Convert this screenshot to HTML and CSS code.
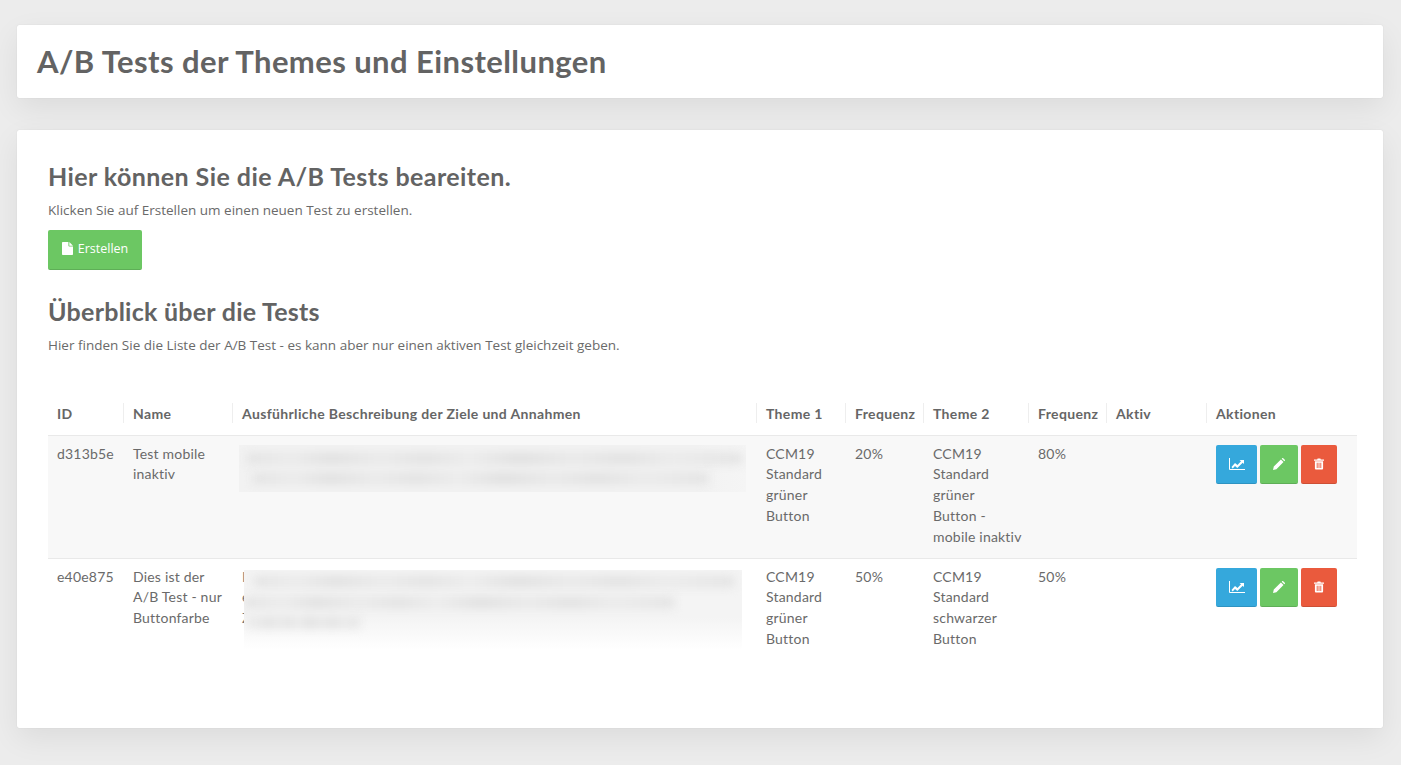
FILE: index.html
```html
<!DOCTYPE html>
<html lang="de">
<head>
<meta charset="utf-8">
<title>A/B Tests</title>
<link rel="stylesheet" href="styles.css">
</head>
<body>
<header class="card page-head"><h1>A/B Tests der Themes und Einstellungen</h1></header>
<main class="card content">
  <h2>Hier können Sie die A/B Tests beareiten.</h2>
  <p>Klicken Sie auf Erstellen um einen neuen Test zu erstellen.</p>
  <a class="btn btn-create" href="#">
    <svg class="file-icon" viewBox="0 0 12 14"><path fill="#fff" d="M0 .8C0 .4.4 0 .8 0H7v4c0 .5.4.9.9.9H12v8.3c0 .4-.4.8-.8.8H.8c-.4 0-.8-.4-.8-.8zM8 0l4 3.900H8z"/></svg>
    Erstellen
  </a>
  <h3>Überblick über die Tests</h3>
  <p>Hier finden Sie die Liste der A/B Test - es kann aber nur einen aktiven Test gleichzeit geben.</p>
  <table>
    <colgroup>
      <col class="c-id"><col class="c-name"><col class="c-desc"><col class="c-theme1"><col class="c-freq1"><col class="c-theme2"><col class="c-freq2"><col class="c-active"><col class="c-actions">
    </colgroup>
    <thead>
      <tr><th>ID</th><th>Name</th><th>Ausführliche Beschreibung der Ziele und Annahmen</th><th>Theme 1</th><th>Frequenz</th><th>Theme 2</th><th>Frequenz</th><th>Aktiv</th><th>Aktionen</th></tr>
    </thead>
    <tbody>
      <tr class="row-a">
        <td>d313b5e</td><td>Test mobile inaktiv</td>
        <td class="desc">
          <div class="redact redact-a"><span class="smear s1"></span><span class="smear s2"></span></div>
        </td>
        <td>CCM19 Standard grüner Button</td><td>20%</td><td>CCM19 Standard grüner Button - mobile&nbsp;inaktiv</td><td>80%</td><td></td>
        <td class="actions">
          <div class="btn-row">
            <a class="btn btn-chart" href="#"><svg viewBox="0 0 16 12"><path fill="none" stroke="#fff" stroke-width="1" d="M.5 0v11.500H16"/><path fill="#fff" d="M2.500 9 6 5l2.500 2L12 3.200 10.500 2H15v4l-1.300-1.300L8.300 10 6 8l-2.300 2.500z"/></svg></a>
            <a class="btn btn-edit" href="#"><svg viewBox="0 0 12 12"><path fill="#fff" d="M0 12l.8-3.400L7.900 1.500l2.600 2.600L3.400 11.200zM8.700.7 9.200.2c.3-.3.700-.3 1 0l1.600 1.600c.3.300.3.700 0 1l-.5.5z"/></svg></a>
            <a class="btn btn-del" href="#"><svg viewBox="0 0 11 12"><path fill="#fff" fill-rule="evenodd" d="M3.500 1 4 0h3l.5 1H11v1.300H0V1zM1 3h9v8c0 .6-.4 1-1 1H2c-.6 0-1-.4-1-1zm2 1.500V10.500h1V4.500zm2 0V10.500h1V4.500zm2 0V10.500h1V4.500z"/></svg></a>
          </div>
        </td>
      </tr>
      <tr>
        <td>e40e875</td><td>Dies ist der A/B Test - nur Buttonfarbe</td>
        <td class="desc">
          <span class="peek">I<br>e<br>Z</span>
          <div class="redact redact-b"><span class="smear s3"></span><span class="smear s4"></span><span class="smear s5"></span></div>
        </td>
        <td>CCM19 Standard grüner Button</td><td>50%</td><td>CCM19 Standard schwarzer Button</td><td>50%</td><td></td>
        <td class="actions">
          <div class="btn-row">
            <a class="btn btn-chart" href="#"><svg viewBox="0 0 16 12"><path fill="none" stroke="#fff" stroke-width="1" d="M.5 0v11.500H16"/><path fill="#fff" d="M2.500 9 6 5l2.500 2L12 3.200 10.500 2H15v4l-1.300-1.300L8.300 10 6 8l-2.300 2.500z"/></svg></a>
            <a class="btn btn-edit" href="#"><svg viewBox="0 0 12 12"><path fill="#fff" d="M0 12l.8-3.400L7.900 1.500l2.600 2.600L3.400 11.200zM8.700.7 9.200.2c.3-.3.700-.3 1 0l1.600 1.600c.3.300.3.700 0 1l-.5.5z"/></svg></a>
            <a class="btn btn-del" href="#"><svg viewBox="0 0 11 12"><path fill="#fff" fill-rule="evenodd" d="M3.500 1 4 0h3l.5 1H11v1.300H0V1zM1 3h9v8c0 .6-.4 1-1 1H2c-.6 0-1-.4-1-1zm2 1.500V10.500h1V4.500zm2 0V10.500h1V4.500zm2 0V10.500h1V4.500z"/></svg></a>
          </div>
        </td>
      </tr>
    </tbody>
  </table>
</main>
</body>
</html>
```

FILE: styles.css
```css
* { box-sizing: border-box; }
html, body { height: 100%; }
body {
  margin: 0;
  padding: 25px 18px 0 17px;
  background: #ececec;
  color: #666;
  font-family: "Lato", "Open Sans", sans-serif;
  font-size: 13px;
  overflow: hidden;
}
.card {
  background: #fff;
  border-radius: 2px;
  box-shadow: 0 0 1px rgba(0,0,0,.18), 0 10px 30px rgba(0,0,0,.07);
}
.page-head {
  height: 73px;
  padding: 0 20px 2px;
  display: flex;
  align-items: center;
}
h1, h2, h3 {
  margin: 0;
  font-family: "Lato", sans-serif;
  font-weight: 700;
  color: #636363;
}
h1 { font-size: 31px; line-height: 36px; letter-spacing: .42px; }
h2 { font-size: 25px; line-height: 30px; letter-spacing: .43px; margin: -1px 0 10px; }
h3 { font-size: 25px; line-height: 28px; margin: 27px 0 11px; letter-spacing: .25px; }
.content {
  margin-top: 32px;
  height: 598px;
  padding: 32px 26px 0 31px;
}
p { margin: 0; line-height: 18px; font-family: "Open Sans", sans-serif; font-size: 13.5px; color: #6a6a6a; }
.content > p { margin-bottom: 11px; }
.btn {
  display: inline-flex;
  align-items: center;
  justify-content: center;
  border-radius: 2px;
  color: #fff;
  text-decoration: none;
  border-bottom: 1px solid rgba(0,0,0,.12);
}
.btn-create {
  width: 94px;
  height: 40px;
  gap: 5px;
  background: #6cc763;
  font-family: "Open Sans", sans-serif;
  font-size: 12.5px;
  padding-bottom: 3px;
}
.file-icon { width: 11px; height: 13px; }
table {
  width: 1309px;
  margin-top: 40px;
  border-collapse: collapse;
  table-layout: fixed;
  font-size: 14px;
  letter-spacing: .2px;
}
.c-id { width: 74px; }
.c-name { width: 109px; }
.c-desc { width: 524px; }
.c-theme1 { width: 89px; }
.c-freq1 { width: 78px; }
.c-theme2 { width: 105px; }
.c-freq2 { width: 78px; }
.c-active { width: 100px; }
.c-actions { width: 152px; }
th {
  height: 41px;
  padding: 0 0 1px 11px;
  text-align: left;
  font-size: 14px;
  letter-spacing: .35px;
  font-weight: 700;
  color: #666;
  border-bottom: 1px solid #e9e9e9;
  background-image: linear-gradient(#eee, #eee);
  background-repeat: no-repeat;
  background-size: 1px 20px;
  background-position: 1px 9px;
  white-space: nowrap;
}
th:first-child { background-image: none; padding-left: 9px; }
td {
  padding: 8px 8px 8px 11px;
  vertical-align: top;
  line-height: 20.8px;
  color: #6a6a6a;
  border-bottom: 1px solid #e9e9e9;
}
td:first-child { padding-left: 9px; }
tbody tr:last-child td { border-bottom: 0; height: 120px; }
.row-a td { background: #f8f8f8; height: 123px; }
.desc { position: relative; overflow: hidden; }
.peek { color: #777; }
.redact { position: absolute; overflow: hidden; }
.redact-a { left: 8px; top: 9px; width: 507px; height: 47px; background: linear-gradient(90deg, #f2f2f2 90%, #f5f5f5); }
.redact-b { left: 13px; top: 11px; width: 498px; height: 80px; background: linear-gradient(#f4f4f4 60%, #fff 100%); }
.smear {
  position: absolute;
  display: block;
  height: 11px;
  filter: blur(5px);
  background: linear-gradient(90deg, #e2e2e2, #eaeaea 9%, #dfdfdf 17%, #e9e9e9 27%, #e1e1e1 36%, #ebebeb 45%, #dedede 55%, #e8e8e8 66%, #e0e0e0 76%, #eaeaea 86%, #e2e2e2);
}
.s1 { left: 8px; top: 8px; width: 495px; }
.s2 { left: 14px; top: 28px; width: 455px; }
.s3 { left: 10px; top: 6px; width: 480px; }
.s4 { left: 0; top: 27px; width: 430px; }
.s5 { left: 5px; top: 47px; width: 110px; }
.actions { padding-left: 11px; padding-top: 9px; }
.btn-row { display: flex; gap: 3px; }
.btn-row .btn { height: 39px; }
.btn-chart { width: 41px; background: #35a8dc; }
.btn-edit { width: 38px; background: #6cc763; }
.btn-del { width: 36px; background: #ea5a3d; }
.btn-chart svg { width: 16px; height: 12px; }
.btn-edit svg { width: 12px; height: 12px; }
.btn-del svg { width: 10px; height: 12px; }
```
